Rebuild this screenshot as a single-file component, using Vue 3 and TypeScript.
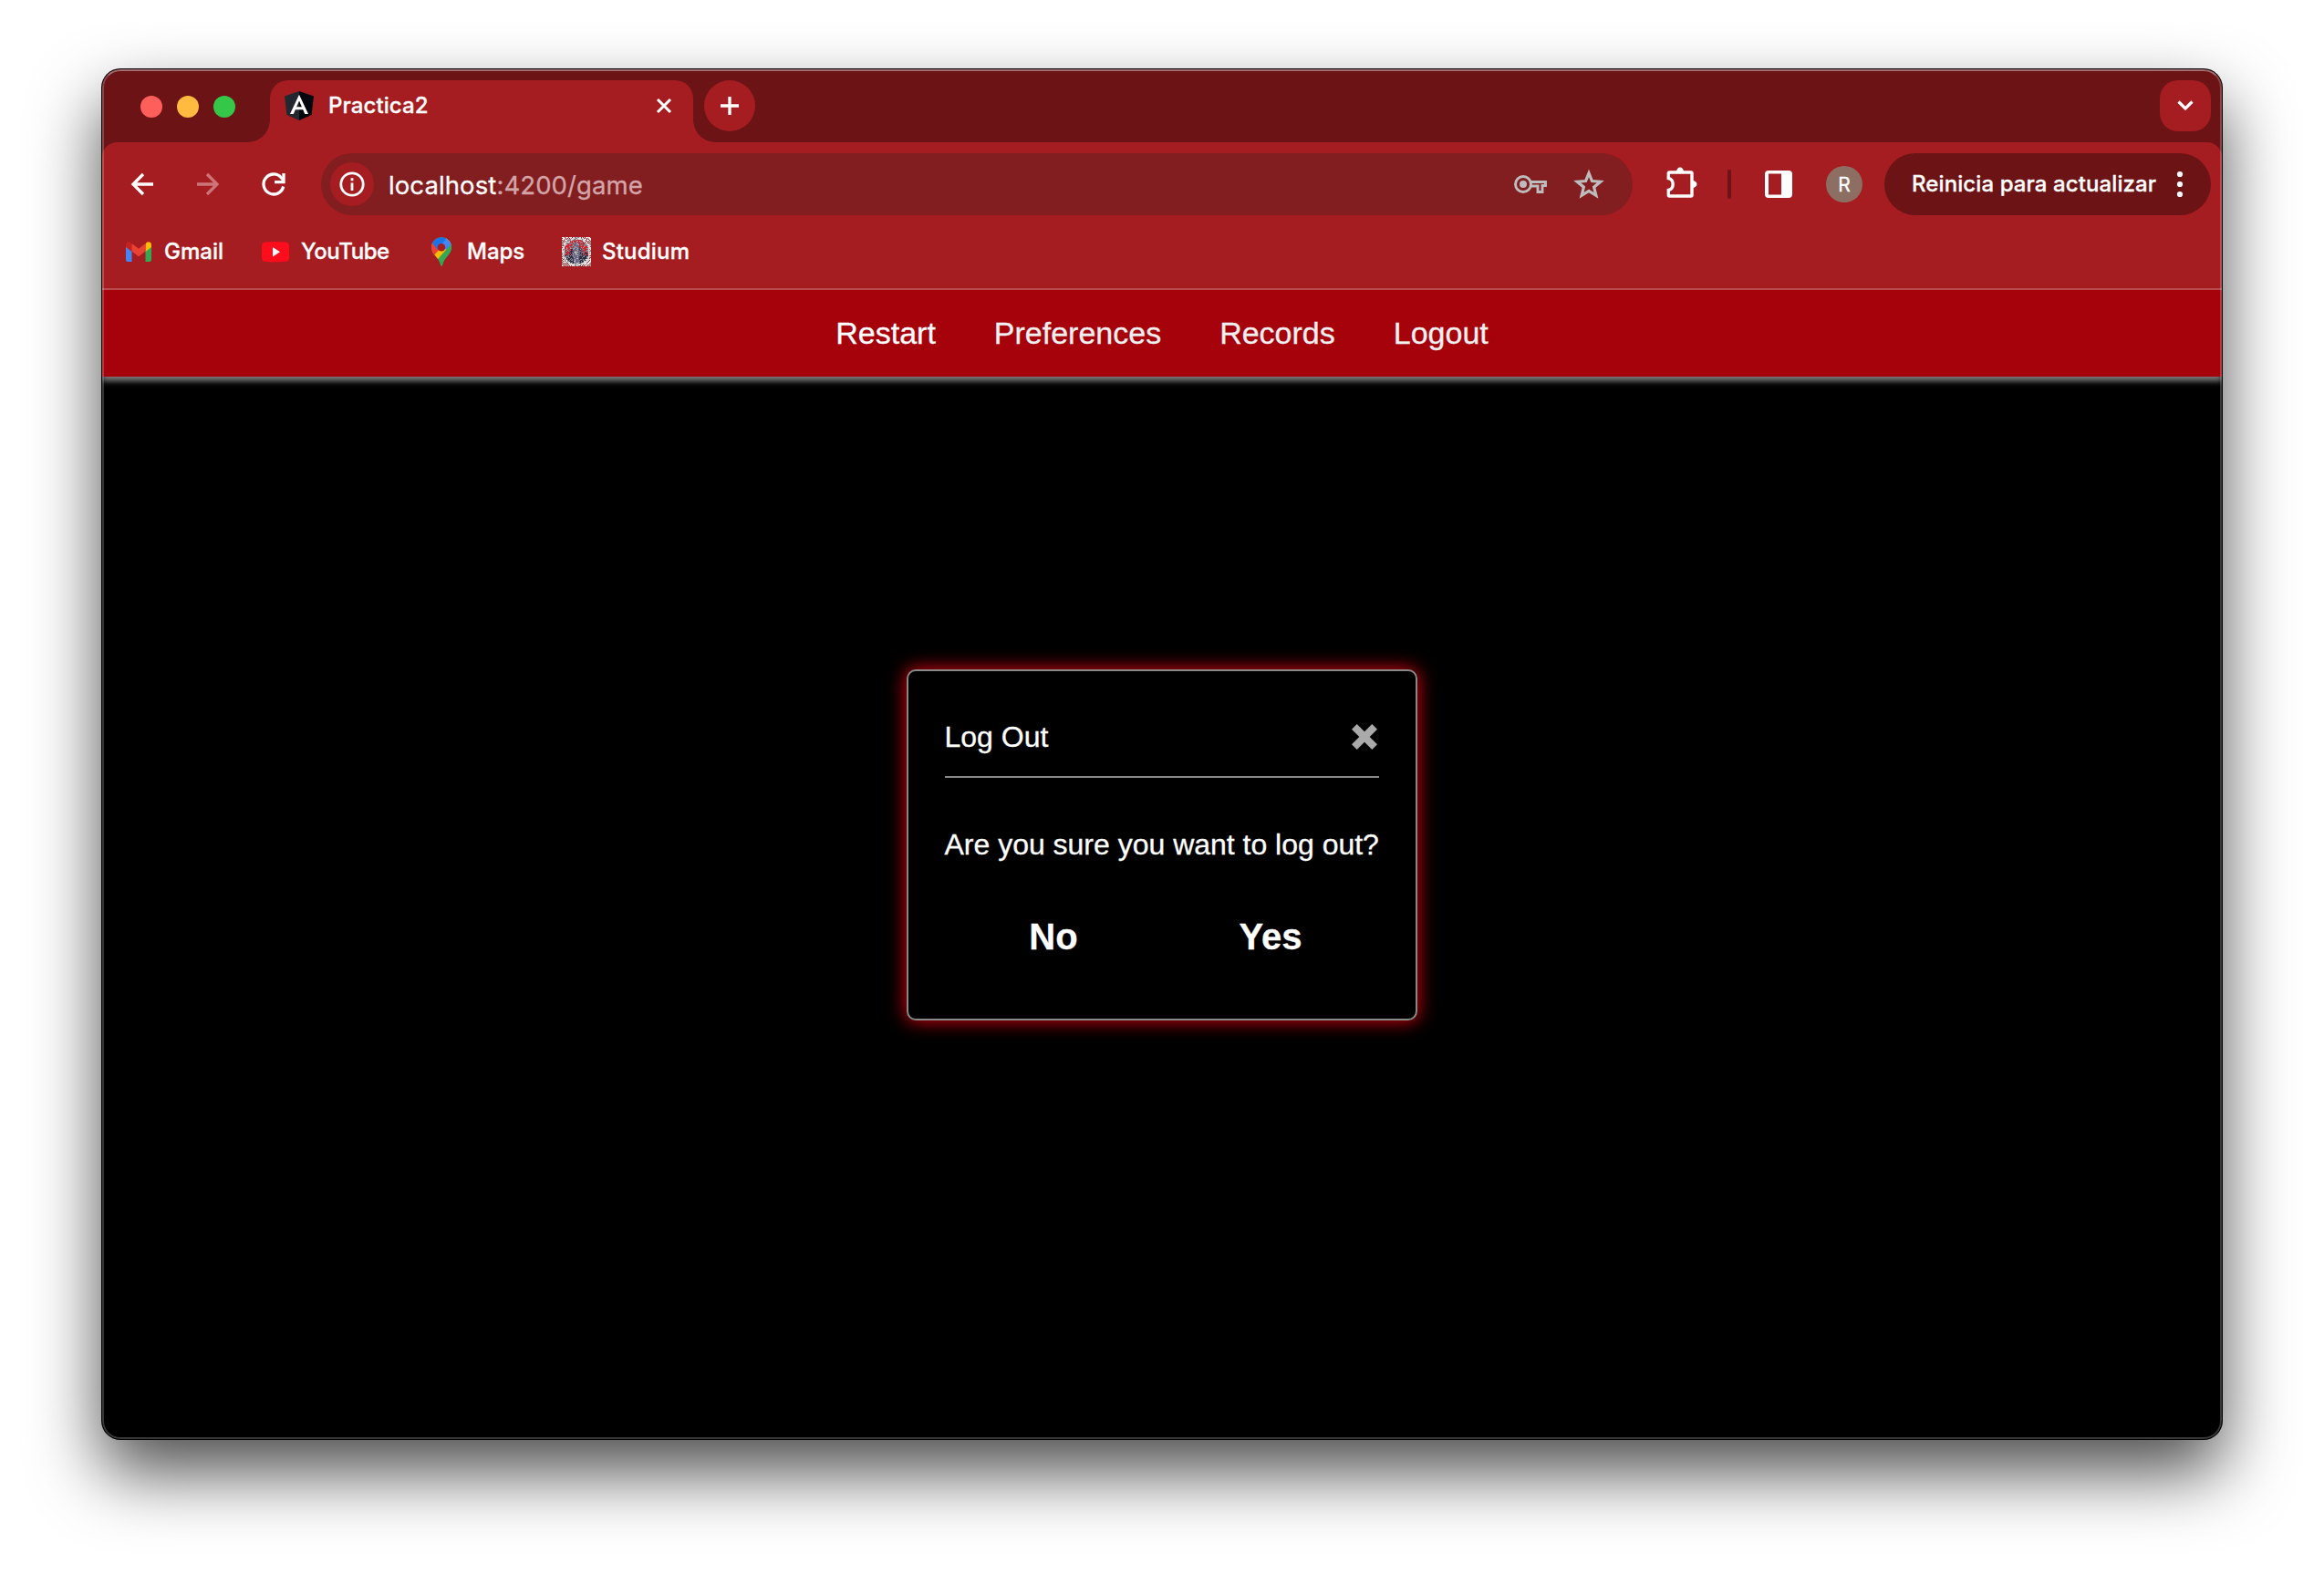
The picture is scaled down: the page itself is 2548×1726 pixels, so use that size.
<script setup lang="ts">
interface Cell { x: number; y: number; fill: string }

const navLinks: string[] = ['Restart', 'Preferences', 'Records', 'Logout']

// Dithered crest used as the Studium favicon
const crest: Cell[] = []
const tones = ['#3a3a50', '#8b8794', '#252a3c', '#a5a1a9', '#5d5a70', '#cf2a35', '#34405c', '#776c70']
for (let y = 0; y < 32; y++) {
  for (let x = 0; x < 32; x++) {
    const d = Math.hypot(x - 15.5, y - 15.5)
    const n = (x * 73 + y * 151 + x * y * 37 + ((x * x * 7) ^ (y * 13))) % 97
    if (d > 16) {
      if ((x + y) % 2 === 0 || n % 5 === 0) crest.push({ x, y, fill: '#f6eeee' })
    } else if (d > 13.5) {
      crest.push({ x, y, fill: n % 3 === 0 ? '#8f8a8e' : '#dcd8da' })
    } else if (Math.abs(x - 15.5) < 3 && y > 5) {
      crest.push({ x, y, fill: n % 3 === 0 ? '#b6b2bf' : '#6b6880' })
    } else if (d > 7 && y < 20 && n % 2 === 0) {
      crest.push({ x, y, fill: '#d8202c' })
    } else {
      crest.push({ x, y, fill: tones[n % (y > 15 ? 3 : 8)] })
    }
  }
}
</script>

<template>
  <div class="desktop">
    <div class="window">
      <div class="tabstrip">
        <div class="lights"><i class="red"></i><i class="yellow"></i><i class="green"></i></div>
        <div class="tab">
          <svg class="tab-icon" width="32" height="32" viewBox="0 0 32 32">
            <path d="M16 0 0 5.500l2.400 20.500L16 32z" fill="#232730" />
            <path d="M16 0l16 5.500-2.400 20.500L16 32z" fill="#05070f" />
            <path d="M16 3.800 6 25h3.800l2-4.800h8.400l2 4.800H26zM16 10.400l2.900 6.800h-5.800z" fill="#fff" fill-rule="evenodd" />
          </svg>
          <span class="tab-title">Practica2</span>
          <svg class="tab-close" width="18" height="18" viewBox="0 0 18 18"><path d="M2 2l14 14M16 2L2 16" stroke="#fff" stroke-width="3" /></svg>
        </div>
        <button class="new-tab"><svg width="20" height="20" viewBox="0 0 20 20"><path d="M10 0v20M0 10h20" stroke="#fff" stroke-width="3.300" /></svg></button>
        <button class="tab-search"><svg width="18" height="12" viewBox="0 0 18 12"><path d="M1.500 1.500L9 9l7.500-7.500" fill="none" stroke="#fff" stroke-width="3.200" /></svg></button>
      </div>

      <div class="chrome">
        <div class="toolbar">
          <svg class="btn" viewBox="0 0 48 48"><path d="M36 24H14M25 13L14 24l11 11" fill="none" stroke="#fff" stroke-width="3.300" /></svg>
          <svg class="btn" viewBox="0 0 48 48"><path d="M12 24h22M23 13l11 11-11 11" fill="none" stroke="#cd7478" stroke-width="3.300" /></svg>
          <svg class="btn" viewBox="0 0 48 48">
            <path d="M34.700 26.500A11 11 0 1 1 32.500 17l2.500 3" fill="none" stroke="#fff" stroke-width="3.300" />
            <path d="M35 12v9.700h-10" fill="none" stroke="#fff" stroke-width="3.300" />
          </svg>
          <div class="omnibox">
            <span class="site-info">
              <svg width="28" height="28" viewBox="0 0 28 28"><circle cx="14" cy="14" r="12.200" fill="none" stroke="#fff" stroke-width="2.800" /><path d="M14 12.500v8.500M14 7.200v3" stroke="#fff" stroke-width="2.800" /></svg>
            </span>
            <span class="url">localhost<span class="path">:4200/game</span></span>
            <svg class="key" width="36" height="22" viewBox="0 0 36 22">
              <circle cx="10" cy="11" r="8.500" fill="none" stroke="#bdbdbd" stroke-width="2.900" />
              <circle cx="10" cy="11" r="4" fill="#bdbdbd" />
              <path d="M18.500 8.500h16v4h-3.500v7h-5v-6.500h-7.500" fill="none" stroke="#bdbdbd" stroke-width="2.900" />
            </svg>
            <svg class="star" width="34" height="34" viewBox="0 0 34 34"><path d="M17 4.800l3.500 8.700 9.300.7-7.200 6 2.300 9.100L17 24.400l-7.900 4.900 2.300-9.100-7.200-6 9.300-.7z" fill="none" stroke="#bdbdbd" stroke-width="3.200" /></svg>
          </div>
          <svg class="btn puzzle" viewBox="0 0 48 48">
            <path d="M11 11h23q1 0 1 1v24q0 1-1 1H10.500q-1.200 0-1.200-1.200v-5.300c6.500-1 6.500-12 0-13v-5.300q0-1.200 1.200-1.200z" fill="none" stroke="#fff" stroke-width="3.400" />
            <path d="M18 10.500a4 5 0 0 1 8 0zM35.500 20a5 4 0 0 1 0 8z" fill="#fff" />
          </svg>
          <i class="divider"></i>
          <svg class="btn panel" viewBox="0 0 48 48"><path d="M13 9h22q4 0 4 4v22q0 4-4 4H13q-4 0-4-4V13q0-4 4-4zm0 3.500v23h14v-23z" fill="#fff" fill-rule="evenodd" /></svg>
          <span class="avatar">R</span>
          <button class="update"><span>Reinicia para actualizar</span><svg width="8" height="30" viewBox="0 0 8 30"><circle cx="4" cy="4" r="3.100" fill="#fff" /><circle cx="4" cy="15" r="3.100" fill="#fff" /><circle cx="4" cy="26" r="3.100" fill="#fff" /></svg></button>
        </div>
        <div class="bookmarks">
          <span class="bookmark gmail">
            <svg viewBox="0 0 32 32">
              <path d="M2 10l6.500 5v12H4q-2 0-2-2z" fill="#4285f4" /><path d="M30 10l-6.500 5v12H28q2 0 2-2z" fill="#34a853" />
              <path d="M8.500 8v8L2 11V8.500C2 5 5.500 4.500 7.500 6z" fill="#c5221f" /><path d="M23.500 8v8l6.500-5V8.500C30 5 26.500 4.500 24.500 6z" fill="#fbbc04" />
              <path d="M8.500 7l7.500 5.800L23.500 7v8.500L16 21.300l-7.500-5.800z" fill="#ea4335" />
            </svg>Gmail
          </span>
          <span class="bookmark youtube">
            <svg viewBox="0 0 32 32"><path d="M4.500 5.500Q16 4.400 27.500 5.500 31 6 31 10v12q0 4-3.500 4.700Q16 27.700 4.500 26.700 1 26 1 22V10q0-4 3.500-4.500z" fill="#ff0d1c" /><path d="M13 11v10.500l8-5.200z" fill="#fff" /></svg>YouTube
          </span>
          <span class="bookmark maps">
            <svg viewBox="0 0 32 32">
              <defs><clipPath id="pin"><path d="M16 .3c6 0 11 4.700 11 11 0 8-8.200 10.700-10 19.400-.3 1.500-1.700 1.500-2 0-1.500-8.700-10-11.400-10-19.400 0-6.300 5-11 11-11z" /></clipPath></defs>
              <g clip-path="url(#pin)">
                <path d="M0 0h32v32H0z" fill="#34a853" />
                <path d="M0 24l20-23L32-2v6L8 28z" fill="#fbbc04" />
                <path d="M0 3h8l8 8-9 10H0z" fill="#ea4335" /><path d="M5 5L16-2l8 2-12 14z" fill="#1a73e8" />
                <path d="M22 1l8 6-3 5-9 2-4-4z" fill="#4285f4" /><path d="M27 7l-13 15 2 10 14-10z" fill="#34a853" />
              </g>
              <circle cx="16" cy="11.300" r="4.200" fill="#a51d21" />
            </svg>Maps
          </span>
          <span class="bookmark studium">
            <svg viewBox="0 0 32 32" shape-rendering="crispEdges"><rect v-for="c in crest" :key="c.x + '-' + c.y" :x="c.x" :y="c.y" width="1" height="1" :fill="c.fill" /></svg>Studium
          </span>
        </div>
      </div>

      <nav class="nav"><a v-for="link in navLinks" :key="link">{{ link }}</a></nav>

      <main class="page">
        <section class="modal">
          <header>
            <span>Log Out</span>
            <svg width="28" height="28" viewBox="0 0 28 28"><path d="M0 5.700L5.700 0 14 8.300 22.300 0 28 5.700 19.700 14l8.300 8.300-5.700 5.700L14 19.700 5.700 28 0 22.300 8.300 14z" fill="#aaa" /></svg>
          </header>
          <p>Are you sure you want to log out?</p>
          <div class="actions"><button>No</button><button>Yes</button></div>
        </section>
      </main>
    </div>
  </div>
</template>

<style>
body { background: #fff; overflow: hidden; }
</style>

<style scoped>
* { box-sizing: border-box; }
button { border: 0; padding: 0; margin: 0; background: none; color: inherit; font: inherit; }
svg { display: block; flex: none; }
.desktop { width: 2548px; height: 1726px; padding: 76px 112px 0; overflow: hidden; background: #fff; }
.window {
  position: relative; display: flex; flex-direction: column; height: 1502px; overflow: hidden;
  border-radius: 20px; background: #000; color: #fff; font-family: Inter, sans-serif;
  -webkit-text-stroke: 0.3px;
  box-shadow: 0 0 0 1px #000, 0 36px 76px rgba(0, 0, 0, 0.7);
}
.window::after {
  content: ""; position: absolute; inset: 0; z-index: 5; border-radius: 20px; pointer-events: none;
  border: 2px solid rgba(255, 255, 255, 0.22); border-top-color: rgba(255, 255, 255, 0.38);
}
.tabstrip { display: flex; height: 96px; margin-bottom: -16px; padding: 12px 12px 16px 42px; background: #6b1315; }
.lights { display: flex; gap: 16px; width: 142px; padding-top: 17px; }
.lights i { width: 24px; height: 24px; border-radius: 50%; }
.red { background: #ff5f5a; }
.yellow { background: #febb40; }
.green { background: #34c748; }
.tab { position: relative; display: flex; align-items: center; width: 464px; height: 68px; padding: 0 23px 12px 16px; border-radius: 20px 20px 0 0; background: #a51d21; }
.tab::before, .tab::after { content: ""; position: absolute; bottom: 0; width: 24px; height: 24px; }
.tab::before { left: -24px; background: radial-gradient(circle at 0 0, transparent 23.5px, #a51d21 24px); }
.tab::after { right: -24px; background: radial-gradient(circle at 100% 0, transparent 23.5px, #a51d21 24px); }
.tab-title { flex: 1; margin-left: 16px; font-size: 24px; font-weight: 500; line-height: 32px; letter-spacing: 0.1px; }
.new-tab { position: relative; display: grid; place-items: center; width: 56px; height: 56px; margin-left: 12px; border-radius: 50%; background: #a51d21; }
.tab-search { display: grid; place-items: center; width: 56px; height: 56px; margin-left: auto; border-radius: 20px; background: #a51d21; }
.chrome { position: relative; height: 162px; border-radius: 16px 16px 0 0; border-bottom: 2px solid #bb4a4e; background: #a51d21; }
.toolbar { display: flex; align-items: center; height: 92px; padding: 0 12px 0 20px; }
.btn { width: 48px; height: 48px; margin-right: 24px; }
.omnibox { display: flex; align-items: center; width: 1438px; height: 68px; margin-left: 4px; padding: 0 31px 0 10px; border-radius: 34px; background: #821d20; }
.site-info { display: grid; place-items: center; width: 48px; height: 48px; border-radius: 50%; background: #a51d21; }
.url { flex: 1; margin-left: 16px; padding-top: 1px; font-size: 27.5px; line-height: 40px; letter-spacing: 0.1px; }
.path { color: #d3a5a8; }
.star { margin-left: 29px; }
.puzzle { margin: 0 0 0 30px; }
.divider { width: 4px; height: 32px; margin-left: 26px; border-radius: 2px; background: #6b1315; }
.panel { margin: 0 0 0 28px; }
.avatar { display: grid; place-items: center; width: 40px; height: 40px; margin-left: 28px; border-radius: 50%; background: #8d6e63; font-size: 21px; }
.update { display: flex; align-items: center; justify-content: space-between; width: 358px; height: 68px; margin-left: 24px; padding: 0 30px; border-radius: 34px; background: #6b1315; font-size: 24px; font-weight: 500; letter-spacing: 0.1px; white-space: nowrap; }
.update span { margin-top: -2px; }
.bookmarks { display: flex; align-items: center; height: 56px; padding-left: 24px; }
.bookmark { display: flex; align-items: center; gap: 12px; font-size: 24px; font-weight: 500; line-height: 32px; }
.bookmark svg { width: 32px; height: 32px; }
.gmail { width: 150px; }
.youtube { width: 182px; letter-spacing: -0.4px; }
.maps { width: 148px; }
.studium { letter-spacing: 0.2px; }
.nav {
  position: relative; z-index: 1; display: flex; justify-content: center; gap: 64px; height: 95px; padding-top: 28px;
  background: #a5020c; box-shadow: 0 5px 6px #777; color: #f0f0f0;
  font: 34px/38px "Liberation Sans", Arial, sans-serif;
}
.nav a:first-child { color: #fff; }
.page { flex: 1; padding-top: 321px; background: #000; font: 32px/36px "Liberation Sans", Arial, sans-serif; }
.modal { width: 560px; height: 385px; margin: 0 auto; padding: 40px; border: 2px solid #888; border-radius: 10px; background: #000; box-shadow: 0 0 20px 1px #d4000f; }
.modal header { display: flex; justify-content: space-between; height: 77px; padding: 14px 2px 0 0; border-bottom: 2px solid #888; }
.modal header span { margin-left: -0.5px; }
.modal header svg { margin-top: 4px; }
.modal p { margin: 55px 0 60px -0.5px; letter-spacing: -0.01px; white-space: nowrap; }
.actions { display: grid; grid-template-columns: 1fr 1fr; font-size: 40px; font-weight: 700; line-height: 46px; }
</style>
